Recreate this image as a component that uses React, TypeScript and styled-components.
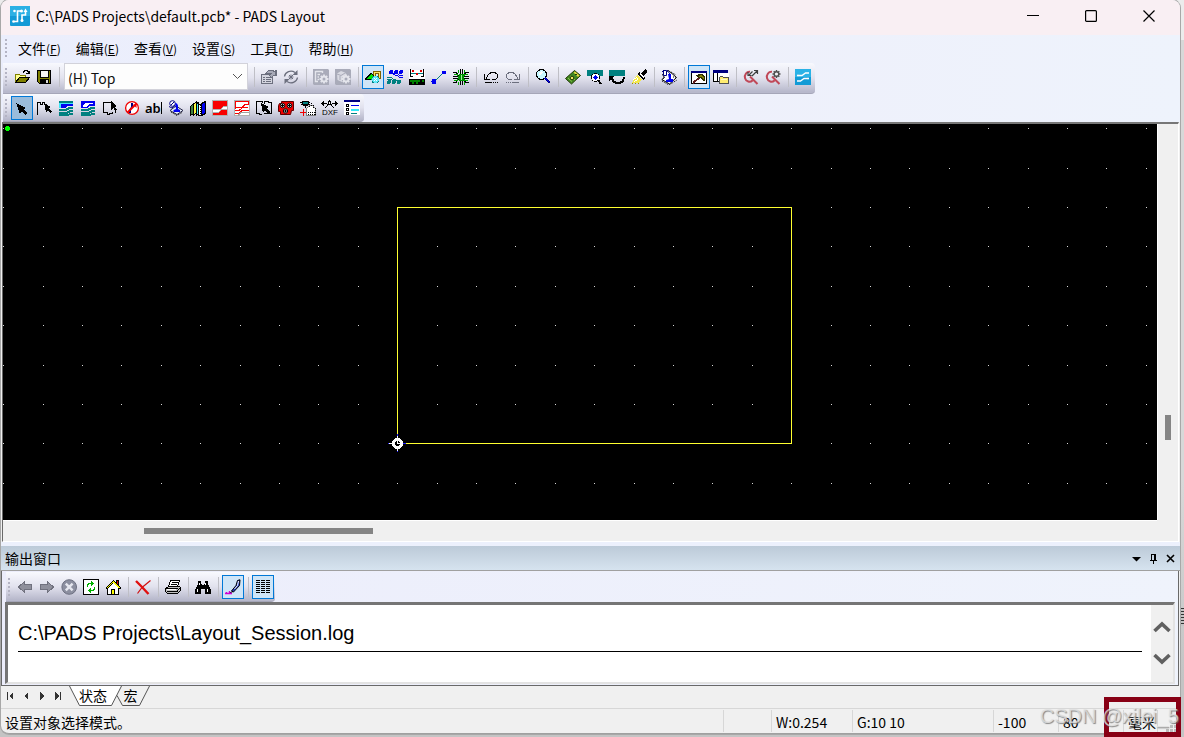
import React from "react";
import styled, { createGlobalStyle, css } from "styled-components";

const ui = `"Noto Sans CJK SC", "Noto Sans", sans-serif`;

const Global = createGlobalStyle`
  *, *::before, *::after { box-sizing: border-box; }
  html, body { margin: 0; padding: 0; }
  body { background: #c8c8c8; font-family: ${ui}; font-size: 14px; color: #000; overflow: hidden; }
  button { font: inherit; color: inherit; background: none; border: 0; padding: 0; margin: 0; }
  svg { display: block; flex: none; }
`;

/* ---------- icon drawing helpers ---------- */

const Glyph = ({ children, smooth, size = 16 }: { children: React.ReactNode; smooth?: boolean; size?: number }) => (
  <svg width={size} height={size} viewBox="0 0 16 16" shapeRendering={smooth ? "auto" : "crispEdges"} aria-hidden="true">
    {children}
  </svg>
);
const F = ({ c = "#000", d, o }: { c?: string; d: string; o?: string }) => <path d={d} fill={c} stroke={o} />;
const L = ({ c = "#000", d, w = 1, dash }: { c?: string; d: string; w?: number; dash?: string }) => (
  <path d={d} fill="none" stroke={c} strokeWidth={w} strokeDasharray={dash} />
);

const NAVY = "#000080";
const TEAL = "#008080";
const BLUE = "#0000f0";
const OLIVE = "#808000";
const GREY = "#6c6f7e";

const Open = () => (
  <Glyph>
    <F c="#ffff90" o="#808000" d="M1.5 13.5V5.5H5.5L6.5 6.5H11.5V8.5H5.5Z" />
    <F c={OLIVE} o="#000" d="M1.5 13.5L5.5 8.5H15.5L11.5 13.5Z" />
    <L d="M9.5 3.5V2.5H10.5V1.5H13.5V2.5H14.5V4M12 4.5H15.5V2" />
  </Glyph>
);
const Save = () => (
  <Glyph>
    <F c={OLIVE} o="#000" d="M1.5 1.5H14.5V14.5H3.5L1.5 12.5Z" />
    <F c="#f4f4f4" o="#000" d="M4.5 1.5H12.5V8.5H4.5Z" />
    <F d="M4 10H13V15H4Z" />
    <F c="#d8d8d8" d="M10 11H12V14H10Z" />
  </Glyph>
);
const Props = () => (
  <Glyph>
    <F c="#d4d5df" o={GREY} d="M.5 5.5H11.5V14.5H.5Z" />
    <L c={GREY} d="M2 8.5H4M5 8.5H10M2 10.5H4M5 10.5H10M2 12.5H4M5 12.5H10" />
    <F c="#a8aab8" o={GREY} d="M4.5 4.5L7.5 1.5H12.5V2.5H15.5V6.5H12.5L10.5 8.5L8.5 6.5L10 4.5Z" />
    <F c={GREY} d="M14 1H16V7H14Z" />
  </Glyph>
);
const Cycle = () => (
  <Glyph smooth>
    <L c={GREY} w={1.3} d="M1.5 7.5A6.5 6 0 0 1 12 3.5M14.5 8.5A6.5 6 0 0 1 4 12.5" />
    <F c={GREY} d="M14.5 1V6H9.5ZM1.5 15V10H6.5Z" />
    <L c={GREY} d="M8 5.5V10.5M5.5 8H10.5M6 6L10 10M10 6L6 10" />
  </Glyph>
);
const gear = "M11 5.5V14.5M6.5 10H15.5M7.8 6.8L14.2 13.2M14.2 6.8L7.8 13.2";
const DocGear = () => (
  <Glyph smooth>
    <F c="#a9abb9" d="M0 0H15L16 1V16H1L0 15Z" />
    <L c="#e4e5ec" w={1.4} d="M2.5 2.5H9.5V4M2.5 2V12.5H5M4.5 5.5H7M4.5 8H6M4.5 10.5H6" />
    <L c="#e4e5ec" w={1.8} d={gear} />
    <circle cx="11" cy="10" r="3.4" fill="#e4e5ec" />
    <circle cx="11" cy="10" r="1.5" fill="#a9abb9" />
  </Glyph>
);
const BoxGear = () => (
  <Glyph smooth>
    <F c="#a9abb9" d="M0 0H15L16 1V16H1L0 15Z" />
    <F c="#d9dae3" d="M2 4.5L6 2L10 3.5L11.5 6L7 9V13L2.5 11Z" />
    <L c="#a9abb9" d="M2 5L6 6.5L10 4M5 7V11" />
    <L c="#e4e5ec" w={1.8} d={gear} />
    <circle cx="11" cy="10" r="3.4" fill="#e4e5ec" />
    <circle cx="11" cy="10" r="1.5" fill="#a9abb9" />
  </Glyph>
);
const Shapes = () => (
  <Glyph>
    <F c="#806000" d="M8 2H16V10H8Z" />
    <F c="#ffe060" d="M9 3H15V9H9Z" />
    <F c="#806000" d="M10 4H14V8H10Z" />
    <F c="#cfe5f7" d="M11 5H13V7H11Z" />
    <F d="M0 11V9L6 3L10 8V11Z" />
    <F c="#00e000" d="M1 10L6 5L9 8V10Z" />
    <circle cx="10.5" cy="10.5" r="4" fill={TEAL} />
    <circle cx="10.5" cy="10.5" r="3.2" fill="#60e8f8" />
    <L c="#fff" d="M9 9L12 12M12 9L9 12" />
  </Glyph>
);
const Ratsnest = () => (
  <Glyph>
    <L c={BLUE} d="M4 3L8 6H10L12 8H16M9 3L12 6H16M14 3L16 4" />
    <L c={TEAL} d="M12 13L8 10H6L4 8H0M7 13L4 10H0M2 13L0 12" />
    {[4, 9, 14].map((x) => <circle key={x} cx={x} cy="3" r="2" fill={BLUE} />)}
    {[2, 7, 12].map((x) => <circle key={x} cx={x} cy="13" r="2" fill={TEAL} />)}
  </Glyph>
);
const Strip = () => (
  <Glyph>
    <F c="#fff" d="M0 1H16V10H0Z" />
    <F d="M0 10H16V16H0Z" />
    <F c="#008000" d="M1 11H11V13H13V11H15V13H9V15H7V13H5V15H3V13H1Z" />
    <L d="M1.5 0V8M14.5 0V8M1 7.5H4M12 7.5H15" />
    <L c={TEAL} d="M2 4.5H14" />
    <F c="#e00000" d="M3 1H5V3H3ZM11 1H13V3H11ZM7 4H9V6H7Z" />
  </Glyph>
);
const Connect = () => (
  <Glyph>
    <L c={TEAL} d="M3 13L13 3" />
    <circle cx="3" cy="12.5" r="2.5" fill={BLUE} />
    <circle cx="13" cy="3.5" r="2" fill={BLUE} />
  </Glyph>
);
const Burst = () => (
  <Glyph>
    <L c="#000" d="M0 3.5H3L6 7M0 7.5H5M0 9.5H5M0 13.5H3L6 10M16 3.5H13L10 7M16 7.5H11M16 9.5H11M16 13.5H13L10 10M7.5 0V5M9.5 0V5M7.5 16V11M9.5 16V11" />
    <L c="#00a000" d="M1 5.5H4L6 8.5L4 11.5H1M15 5.5H12L10 8.5L12 11.5H15M5.5 1V4M11.5 1V4M5.5 13V16M11.5 13V16" />
    <F c="#009000" d="M6 5H11V12H6Z" />
    <F c="#a0f0a0" d="M8 6H9V11H8Z" />
  </Glyph>
);
const undoArc = "M3 10L5.5 5.5L8 3.5H12L14.5 5.5V8.5L12.5 10.5H9";
const undoHead = "M1.5 5V10.5H7";
const Undo = () => (
  <Glyph>
    <L d={undoArc} />
    <L d={undoHead} />
    <L d="M2 13.5H9" />
    <L d="M10 13.5H16" dash="1 1" />
  </Glyph>
);
const Redo = () => (
  <Glyph>
    <g transform="matrix(-1 0 0 1 16 0)">
      <L c={GREY} d={undoArc} />
      <L c={GREY} d={undoHead} />
      <L c={GREY} d="M2 13.5H9" />
      <L c={GREY} d="M10 13.5H16" dash="1 1" />
    </g>
  </Glyph>
);
const Zoom = () => (
  <Glyph>
    <circle cx="6.5" cy="5.5" r="5" fill="#c8f8ff" stroke="#000" />
    <L c="#fff" w={2} d="M4 6L7 3" />
    <L c={NAVY} w={2} d="M10 9L15 14" />
    <L c={BLUE} d="M10.5 9.5L14.5 13.5" />
  </Glyph>
);
const Board = () => (
  <Glyph smooth>
    <F c="#408820" o="#203800" d="M.5 9.5L9.5 1.5L15.5 6.5L6.5 15Z" />
    <F c="#e8d840" d="M8.5 3.5L10 2.5L14.5 6.5L13 8Z" />
    <L c="#90c850" d="M3 9L7 12.5M5 7L10 11" />
    <circle cx="7" cy="9" r="1.8" fill="#f0e860" stroke="#203800" />
    <F c="#203800" d="M10 5H12V6H10Z" />
  </Glyph>
);
const ViewBoard = () => (
  <Glyph>
    <F c={TEAL} d="M0 1H16V7H0Z" />
    <circle cx="8.5" cy="8.5" r="4.5" fill="#000" />
    <circle cx="8.5" cy="8.5" r="3.6" fill="#fff" />
    <circle cx="8.5" cy="8.5" r="2.2" fill={BLUE} />
    <L w={2} d="M11 11L14 15" />
  </Glyph>
);
const FlipBoard = () => (
  <Glyph>
    <F c={TEAL} d="M0 1H16V7H0Z" />
    <L w={2} d="M3 9L4 12L7 14H11L14 12L15 8" />
    <F d="M0 12V7H5Z" />
  </Glyph>
);
const Brush = () => (
  <Glyph>
    <F d="M16 1L14 0L10 4L8 3L6 5L12 11L14 9L12 7L16 3Z" />
    <F c="#fff" d="M8 5L9 4L13 8L12 9Z" />
    <F c="#f4e848" d="M6 6L11 11L7 14H1L4 8Z" />
    <L c="#fff" dash="1 1" d="M3 13L9 8M2 11L7 7" />
    <L c="#a09000" dash="1 2" d="M1 14.5H8" />
  </Glyph>
);
const Pour = () => (
  <Glyph smooth>
    <F c="#e8f0ff" o="#202040" d="M2 10.5L8 6L15 10.5L9 14.5Z" />
    <L c="#000" dash="1 1" d="M3 12L9 15.5L14 12.5" />
    <circle cx="4.5" cy="3.5" r="2.8" fill="#fff" stroke={NAVY} />
    <L c={NAVY} d="M3 5L6 2M1 6.5L4 8L7 5.5" />
    <F c={BLUE} d="M7 3L9 3.5L10 5.5V9L12 10V12H5.5V10L8 9Z" />
  </Glyph>
);
const Tiles = () => (
  <Glyph smooth>
    <F c="#fff" o="#000" d="M7.5 1.5L15.5 8.5L8.5 15L.8 10.5L3.5 8.5L1.5 5.5Z" />
    <L dash="1 1" d="M1 12L8 16L16 11M10 3L15 6M2 9H4M12 8H15" />
    <F c="#fff" o={NAVY} d="M2.5 1.5H5.5V6.5H2.5Z" />
    <L c={NAVY} d="M6 1L9 5M1 3L3 1" />
    <F c={BLUE} d="M7 5H10V10H12V13H5V11L8 10Z" />
  </Glyph>
);
const Hammer = () => (
  <Glyph>
    <F c="#fff" o="#000" d="M.5 2.5H15.5V14.5H.5Z" />
    <F c={NAVY} d="M0 2H16V4H0Z" />
    <L c="#602020" w={2} d="M2 14L9 8" />
    <F c="#303000" d="M5 7V6L9 5H11L14 8V12H12L9 9H7Z" />
    <F c={OLIVE} d="M7 7L10 6L13 9V10H12L10 8H8Z" />
  </Glyph>
);
const Explorer = () => (
  <Glyph>
    <F c="#fff" o="#000" d="M.5 2.5H14.5V12.5H.5Z" />
    <F c={NAVY} d="M0 1H15V4H0Z" />
    <L d="M4.5 4V13" />
    <F c="#fff" d="M5 4H16V15H6Z" />
    <F c="#ffec70" o="#505050" d="M6.5 14.5V8.5L7.5 7.5H9.5L10.5 8.5H15.5V14.5Z" />
    <L c="#fff8c0" d="M8 10.5H14" />
  </Glyph>
);
const QArrow = () => (
  <Glyph smooth>
    <L c="#c04858" w={2} d="M7 2.8A4.6 5 0 1 0 9.5 11.5M7 7.5L14.5 15" />
    <L c="#404040" w={1.2} d="M6 6L9.5 2.5M9 7L14 2M11 1.5H14.5V5M5 3V6.5H8.5" />
  </Glyph>
);
const QGear = () => (
  <Glyph smooth>
    <L c="#c04858" w={2} d="M7 2.8A4.6 5 0 1 0 9.5 11.5M7 7.5L14.5 15" />
    <L c="#505050" w={1.4} d="M11.5 1V9M7.5 5H15.5M8.7 2.2L14.3 7.8M14.3 2.2L8.7 7.8" />
    <circle cx="11.5" cy="5" r="2.3" fill="#f0f0f4" stroke="#505050" strokeWidth="1.4" />
  </Glyph>
);
const Router = () => (
  <Glyph smooth>
    <F c="#129bd6" d="M0 0H16V16H0Z" />
    <F c="#2bb2e6" d="M0 0H16V8H0Z" />
    <L c="#fff" w={1.3} d="M4 6.5H7L10.5 4H14M2 12H5.5L9 9.5H12" />
    <circle cx="3" cy="6.5" r="1.1" fill="#fff" />
    <circle cx="13" cy="9.5" r="1.1" fill="#fff" />
  </Glyph>
);

const arrow = "M0 0L8 4L5 5L9 9L7 11L4 7L2 10Z";
const Select = () => <Glyph><g transform="translate(2 3)"><F d="M0 0L10 5L7 6L11 10L9 12L6 8L4 11Z" /></g></Glyph>;
const BoardOutline = () => (
  <Glyph>
    <L d="M1.5 15V2.5H4.5V4.5H6.5V2.5H8.5" />
    <g transform="translate(8 3)"><F d="M0 0L7 4L5 5L8 9L6 10L4 7L2 9Z" /></g>
  </Glyph>
);
const Copper = () => (
  <Glyph>
    <F c={TEAL} d="M1 1H15V3H1Z" />
    <F c="#40e8f8" d="M1 3H3V8H1ZM3 3H15V4H3Z" />
    <F c={BLUE} d="M3 4H15V6H9L7 8H3Z" />
    <L c={TEAL} w={2} d="M15 8H11L8 10H1M15 11H12L9 13H1M15 14H12L10 15H1" />
  </Glyph>
);
const CopperCut = () => (
  <Glyph>
    <F c={BLUE} d="M1 1H15V6H10L7 8H1Z" />
    <F c="#fff" d="M5 3H13V4H9L6 7H3V6Z" />
    <L c={TEAL} w={2} d="M15 8H11L8 10H1M15 11H12L9 13H1M15 14H12L10 15H1" />
  </Glyph>
);
const Keepout = () => (
  <Glyph>
    <L d="M10 12V13.5H7.5V14.5H5.5V12.5H1.5V2.5H9M13.5 10V13" />
    <g transform="translate(9 1)"><F d="M0 0L6 5L4 6L6 9L4 10L3 7L0 9Z" /></g>
  </Glyph>
);
const NoEntry = () => (
  <Glyph smooth>
    <circle cx="8" cy="8" r="6.4" fill="#fff" stroke="#f00000" strokeWidth="1.3" />
    <F c={NAVY} d="M7 3H9V7L7 9V13H5V10L7 7Z" />
    <L c="#f00000" w={2} d="M3.5 12.5L12.5 3.5" />
    <F c="#f00000" d="M9 4.5H12.5V8Z" />
  </Glyph>
);
const TextTool = () => (
  <svg width="18" height="16" viewBox="0 0 18 16" aria-hidden="true">
    <text x="0" y="13" fontFamily="Noto Sans, sans-serif" fontWeight="600" fontSize="13">ab</text>
    <path d="M16.5 2V14" stroke="#000" shapeRendering="crispEdges" />
  </svg>
);
const Library = () => (
  <Glyph>
    <F c="#408040" o="#000" d="M.5 6.5L3.5 3.5V13.5L.5 15.5Z" />
    <F c="#f8f840" o="#000" d="M3.5 4.5L6.5 1.5V12.5L3.5 15.5Z" />
    <F c="#40e8f8" o="#000" d="M6.5 3.5L8.5 2.5V13.5L6.5 15.5Z" />
    <F c="#fff" o="#000" d="M8.5 4.5H11.5V15.5H8.5Z" />
    <F c={BLUE} o="#000" d="M11.5 3.5L15.5 1.5V13.5L11.5 15.5Z" />
    <L dash="1 1" d="M10.5 5V15" />
  </Glyph>
);
const Plane = () => (
  <Glyph>
    <F c="#b0b0b0" d="M0 0H16V16H0Z" />
    <F c="#f80000" d="M1 1H15V6H11L8 9H1ZM1 13H6L9 10H15V15H1Z" />
    <F c="#fff" d="M1 10H8L11 7H15V9H10L6 12H1Z" />
  </Glyph>
);
const PlaneCut = () => (
  <Glyph>
    <F c="#b0b0b0" d="M0 0H16V16H0Z" />
    <F c="#fff" d="M1 1H15V15H1Z" />
    <L c="#f80000" d="M1.5 8.5V1.5H14.5V4.5H11L8 7.5H1.5M1 13.5H5L8 10.5H14.5M1 10.5H5L9 7.5H14" />
    <L c="#a0a0a0" d="M4 15.5L7 12.5H15" />
  </Glyph>
);
const CopyShape = () => (
  <Glyph>
    <L d="M6 14.5H3.5V13.5H.5V1.5H6.5V3M8 13.5H15.5V2.5H12.5V1.5H8.5V4" />
    <g transform="translate(5 3)"><F d={arrow} /></g>
  </Glyph>
);
const Autoplace = () => (
  <Glyph smooth>
    <F c="#f00000" o="#600000" d="M1.5 3.5H3.5V1.5H15.5V10.5H13.5L12.5 14.5H2.5V11.5H.5V5.5Z" />
    {[[4.5, 5.5], [11.5, 5.5], [7.5, 11]].map(([x, y]) => (
      <g key={x}>
        <circle cx={x} cy={y} r="2.2" fill="#fff" stroke="#000" />
        <path d={`M${x - 1.5} ${y}h3M${x} ${y - 1.5}v3`} stroke="#000" />
      </g>
    ))}
  </Glyph>
);
const AddPart = () => (
  <Glyph>
    <F c={TEAL} o="#000" d="M2.5 1.5H8.5V4.5H2.5Z" />
    <L d="M0 2.5H2M1 4.5H2M5.5 5V8M8 5.5H3" />
    <L c="#f00000" d="M0 12.5H6M3.5 9V16" />
    <F c="#fff" o="#808080" d="M6.5 8.5L9.5 5.5H12.5L15.5 8.5V15.5H6.5Z" />
    <L dash="1 1" d="M9.5 2V8M11.5 3V6M13.5 5V8M15.5 8V16M8 12.5H15M8 14.5H15" />
  </Glyph>
);
const Dxf = () => (
  <svg width="18" height="16" viewBox="0 0 18 16" shapeRendering="crispEdges" aria-hidden="true">
    <L d="M1 3.5H6M11 3.5H16M8.5 0V2M4 8L8.5 3L13 8M3 1.5L1 3.5L3 5.5M14 1.5L16 3.5L14 5.5" />
    <F c="#fff" o="#000" d="M7.5 1.5H9.5V4.5H7.5Z" />
    <text x="1" y="15" fontFamily="Liberation Sans, sans-serif" fontSize="8">DXF</text>
  </svg>
);
const Options = () => (
  <Glyph>
    <F c="#fff" d="M0 0H16V15H0Z" />
    <F c={NAVY} d="M0 0H16V2H0Z" />
    <L d="M2.5 4.5H4.5V6.5H2.5ZM2.5 8.5H4.5V10.5H2.5ZM2.5 12.5H4.5V14.5H2.5Z" />
    <L c={BLUE} d="M7 5.5H15" />
    <L c="#30e8f8" d="M7 9.5H15" w={2} />
    <L c={TEAL} d="M7 13.5H13" />
  </Glyph>
);

const Back = () => <Glyph><F c="#8f909c" o="#70717e" d="M1.5 8L7.5 2.5V5.5H14.5V10.5H7.5V13.5Z" /></Glyph>;
const Forward = () => <Glyph><F c="#8f909c" o="#70717e" d="M14.5 8L8.5 2.5V5.5H1.5V10.5H8.5V13.5Z" /></Glyph>;
const Stop = () => (
  <Glyph smooth>
    <circle cx="8.2" cy="8" r="7.3" fill="#8c8fa0" stroke="#6d7080" />
    <L c="#e6e7ef" w={2.4} d="M4.8 4.6L11.6 11.4M11.6 4.6L4.8 11.4" />
  </Glyph>
);
const Reload = () => (
  <Glyph>
    <F c="#fff" o="#000" d="M.5 .5H15.5V15.5H.5Z" />
    <L c="#00b000" d="M4.5 8V6L6 4.5H9M11.5 8V10L10 11.5H7" />
    <F c="#00b000" d="M8 2V7L11 4.5ZM8 9V14L5 11.5Z" />
  </Glyph>
);
const Home = () => (
  <Glyph>
    <F c="#000" d="M11 1H14V8H11Z" />
    <F c="#e00000" d="M12 2H13V6H12Z" />
    <F c="#000" d="M2 8L8 2L14 8V16H2Z" />
    <F c="#fff" d="M3 9L8 4L13 9V15H3Z" />
    <F c="#000" d="M0 9L8 1L16 9L15 10L8 4L1 10Z" />
    <F c="#f8f800" d="M1 9L8 2L15 9H14L8 4L2 9Z" />
    <F c="#000" d="M6 10H10V16H6Z" />
    <F c="#f8f800" d="M7 11H9V15H7Z" />
  </Glyph>
);
const Delete = () => (
  <Glyph smooth>
    <L c="#d01010" w={1.2} d="M15.5 1.5L7 8.5L2.5 14.5" />
    <L c="#e01010" w={2.4} d="M1 2L6 7L13.5 15" />
  </Glyph>
);
const Print = () => (
  <Glyph>
    <F c="#fff" o="#000" d="M5.5 1.5H14.5L12.5 7.5H3.5Z" />
    <L d="M7 3.5H13M6 5.5H12" />
    <F c="#c0c0c0" o="#000" d="M3.5 7.5H14.5L15.5 8.5V11.5L12.5 14.5H2.5L.5 12.5V9.5Z" />
    <L d="M1 9.5H13M2 12.5H12L15 9" />
    <L c="#fff" d="M2 10.5H11" />
  </Glyph>
);
const Find = () => (
  <Glyph>
    <F d="M3 2H6V4L7 6H9L10 4V2H13V5L16 11V15H10V10H6V15H0V11L3 5Z" />
    <L c="#fff" d="M4.5 4V6M2.5 10V13M10.5 4V6M12.5 10V13" />
  </Glyph>
);
const Pen = () => (
  <Glyph smooth>
    <F c="#2040c0" o="#000" d="M6.5 12L11 6.5L12.5 1.5L15 .8L14.5 6.5L8.5 13Z" />
    <L c="#fff" d="M9.5 10L12.5 6.5L13.5 2" />
    <L c="#000" d="M4.5 14L8 12.5" />
    <L c="#d000d0" w={1.4} d="M0 14.5H7M1.5 13V15M4.5 12V15" />
  </Glyph>
);
const List = () => (
  <Glyph>
    {[1, 3, 5, 7, 9, 11, 13].map((y) => <L key={y} d={`M1 ${y + 0.5}H5M6 ${y + 0.5}H10M11 ${y + 0.5}H15`} />)}
  </Glyph>
);

/* ---------- layout ---------- */

const Desktop = styled.div`
  position: relative;
  height: 100vh;
  min-height: 480px;
  padding: 0 4px 3px 1px;
  background:
    repeating-linear-gradient(#333 0 1px, #c4c4c4 1px 3px) right 0 top 608px / 4px 18px no-repeat,
    linear-gradient(#ececec 0 40px, #d8d8d8 40px 480px, #c4c4c4 680px);
`;
const Window = styled.main`
  display: flex;
  flex-direction: column;
  height: 100%;
  overflow: hidden;
  background: #f0f0f0;
  border-bottom: 1px solid #a0a0a0;
  border-radius: 8px;
  box-shadow: 0 0 0 1px #a8a8a8;
`;
const TitleBar = styled.header`
  display: flex;
  align-items: center;
  flex: none;
  height: 35px;
  padding: 0 25px 3px 9px;
  background: #f9eff3;
`;
const Title = styled.h1`
  flex: 1;
  margin: 0 0 0 6px;
  font: 400 14px/20px ${ui};
`;
const Captions = styled.div`
  display: flex;
  gap: 46px;
`;
const CaptionButton = styled.button`
  width: 12px;
  height: 12px;
`;
const Docks = styled.div`
  flex: none;
  background: linear-gradient(90deg, #ebeefc, #eef0fb 60%, #eef3fc);
`;
const MenuBar = styled.nav`
  display: flex;
  align-items: center;
  height: 28px;
  padding: 0 0 2px 4px;
  gap: 15px;
`;
const MenuItem = styled.button`
  line-height: 20px;
  white-space: nowrap;
`;
const Accel = styled.span`
  font-size: 12px;
`;
const Grip = styled.span<{ $space?: number }>`
  flex: none;
  width: 2px;
  height: 18px;
  margin-right: ${(p) => p.$space ?? 4}px;
  background: repeating-linear-gradient(#b4b4c4 0 2px, transparent 2px 4px);
`;
const Toolbar = styled.div<{ $height: number; $under?: number; $inset?: number }>`
  display: flex;
  align-items: center;
  width: max-content;
  height: ${(p) => p.$height}px;
  margin-left: ${(p) => p.$inset ?? 2}px;
  padding: 0 1px ${(p) => p.$under ?? 0}px 2px;
  background: linear-gradient(#f8f9fe, #e2e2ee 50%, #b8b9cc 95%);
  border-bottom: 1px solid #a5a6b8;
  border-radius: 0 4px 4px 0;
`;
const ToolButton = styled.button<{ $state?: "on" | "pressed" }>`
  display: flex;
  align-items: center;
  justify-content: center;
  flex: none;
  width: 22px;
  height: 24px;
  ${(p) => p.$state && css`
    border: 1px solid #0078d7;
    background: ${p.$state === "on" ? "#cfe5f7" : "#9abcdb"};
  `}
`;
const Separator = styled.span`
  flex: none;
  width: 1px;
  height: 20px;
  margin: 0 3px 0 4px;
  background: #bfbfc6;
`;
const LayerBox = styled.span`
  position: relative;
  display: block;
  margin: 0 2px 0 1px;
  svg { position: absolute; right: 5px; top: 10px; pointer-events: none; }
`;
const LayerSelect = styled.select`
  display: block;
  appearance: none;
  width: 184px;
  height: 27px;
  padding: 2px 20px 0 3px;
  border: 1px solid #d2d2da;
  border-radius: 0;
  background: #fdfdfd;
  color: #111;
  font: 400 14px/24px ${ui};
`;
const View = styled.section`
  flex: 1 1 0;
  min-height: 0;
  display: grid;
  grid-template-columns: 1fr 21px;
  grid-template-rows: 1fr 21px;
  margin: 0 1px;
  border: solid;
  border-width: 2px 1px 1px 1px;
  border-color: #777 #fff #fff #696969;
`;
const Sheet = styled.svg`
  width: 100%;
  height: 100%;
  min-height: 0;
  background: #000;
`;
const ScrollV = styled.div`
  display: flex;
  flex-direction: column;
  align-items: center;
  justify-content: flex-end;
  padding-bottom: 80px;
  border-left: 1px solid #fff;
`;
const ScrollH = styled.div`
  padding: 7px 0 0 141px;
  border-top: 1px solid #fff;
`;
const Thumb = styled.div<{ $w: number; $h: number }>`
  width: ${(p) => p.$w}px;
  height: ${(p) => p.$h}px;
  background: #858585;
`;
const PanelTitle = styled.div`
  display: flex;
  align-items: center;
  flex: none;
  height: 29px;
  padding: 0 4px;
  border-top: 4px solid #ecf0fc;
  border-bottom: 1px solid #a0a0a0;
  background: linear-gradient(#bccad8, #d6e3ef);
  h2 { flex: 1; margin: 0; font: 400 14px/20px ${ui}; }
`;
const PanelButton = styled.button`
  width: 11px;
  height: 11px;
  margin-left: 6px;
`;
const Panel = styled.section`
  flex: none;
  margin-right: 1px;
  padding: 1px 3px 0 3px;
  border: 1px solid #696969;
  border-top: 0;
  background: linear-gradient(90deg, #ecedfb, #eff3fc);
`;
const LogFrame = styled.div`
  display: flex;
  height: 82px;
  margin-bottom: 1px;
  border: solid;
  border-width: 3px 2px 2px 3px;
  border-color: #757575 #e3e3e3 #e3e3e3 #757575;
  background: #fff;
`;
const Log = styled.div`
  flex: 1;
  padding: 13px 9px 0 10px;
`;
const LogPath = styled.p`
  margin: 0;
  padding-bottom: 3px;
  border-bottom: 1px solid #000;
  font: 400 20px/30px "Liberation Sans", sans-serif;
`;
const LogScroll = styled.div`
  display: flex;
  flex-direction: column;
  align-items: center;
  gap: 20px;
  width: 22px;
  padding-top: 16px;
  background: #f0f0f0;
`;
const TabStrip = styled.div`
  display: flex;
  flex: none;
  height: 23px;
  border-bottom: 1px solid #d7d7d7;
`;
const TabNav = styled.div`
  display: flex;
  gap: 6px;
  padding: 5px 6px 0 4px;
`;
const NavButton = styled.button`
  width: 10px;
  height: 10px;
`;
const Tab = styled.button<{ $w: number }>`
  position: relative;
  width: ${(p) => p.$w}px;
  height: 20px;
  margin-right: -6px;
  padding: 0 5px 2px 0;
  line-height: 18px;
  svg { position: absolute; left: 0; top: 0; }
  span { position: relative; }
`;
const StatusBar = styled.footer`
  display: flex;
  flex: none;
  height: 24px;
  padding: 1px 0;
  line-height: 24px;
  white-space: nowrap;
`;
const Message = styled.span`
  flex: 1;
  padding-left: 4px;
`;
const Cell = styled.span<{ $w: number }>`
  flex: none;
  width: ${(p) => p.$w}px;
  padding-left: 4px;
  border-left: 1px solid #d7d7d7;
`;
const Highlight = styled.div`
  position: absolute;
  right: 3px;
  bottom: 0;
  width: 77px;
  height: 40px;
  border: 5px solid #880015;
`;
const Watermark = styled.div`
  position: absolute;
  right: 5px;
  bottom: 9px;
  font: 400 20px/24px "Liberation Sans", sans-serif;
  color: rgba(225, 225, 225, 0.8);
  text-shadow: 1px 1px 1px rgba(110, 110, 110, 0.8);
`;

/* ---------- parts ---------- */

type Item = [string, React.ComponentType, ("on" | "pressed")?] | "|";

const Tools = ({ items }: { items: Item[] }) => (
  <>
    {items.map((it, i) => {
      if (it === "|") return <Separator key={i} />;
      const [label, Icon, state] = it;
      return (
        <ToolButton key={i} aria-label={label} $state={state}><Icon /></ToolButton>
      );
    })}
  </>
);

const fileTools: Item[] = [["打开", Open], ["保存", Save], "|"];
const mainTools: Item[] = [
  "|", ["特性", Props], ["循环", Cycle],
  "|", ["文档设置", DocGear], ["封装设置", BoxGear],
  "|", ["绘图", Shapes, "on"], ["设计", Ratsnest], ["标注", Strip], ["布线", Connect], ["BGA", Burst],
  "|", ["撤销", Undo], ["重做", Redo],
  "|", ["缩放", Zoom],
  "|", ["板", Board], ["查看板", ViewBoard], ["翻转", FlipBoard], ["重画", Brush],
  "|", ["灌注", Tiles],
  "|", ["输出窗口", Hammer, "on"], ["项目浏览器", Explorer],
  "|", ["查询", QArrow], ["查询设置", QGear],
  "|", ["Router", Router],
];
const drawTools: Item[] = [
  ["选择", Select, "pressed"], ["绘图线", BoardOutline], ["铜箔", Copper], ["铜挖空", CopperCut],
  ["覆铜", Keepout], ["禁止区", NoEntry], ["文本", TextTool], ["灌注管理", Pour], ["库", Library],
  ["平面", Plane], ["平面挖空", PlaneCut], ["复制", CopyShape], ["自动布局", Autoplace],
  ["添加标签", AddPart], ["导入 DXF", Dxf], ["选项", Options],
];
const outputTools: Item[] = [
  ["后退", Back], ["前进", Forward], ["停止", Stop], ["刷新", Reload], ["主页", Home],
  "|", ["删除", Delete], "|", ["打印", Print], "|", ["查找", Find],
  "|", ["记录", Pen, "on"], "|", ["列表", List, "on"],
];
const menus = [["文件", "F"], ["编辑", "E"], ["查看", "V"], ["设置", "S"], ["工具", "T"], ["帮助", "H"]];

const origin = { x: 394, y: 319 };
const pitch = 39.4;
const columns = Array.from({ length: 60 }, (_, i) => Math.round(origin.x + 0.1 + (i - 10) * pitch));
const rows = Array.from({ length: 40 }, (_, i) => Math.round(origin.y + 0.3 + (i - 8) * pitch));

const DesignSheet = () => (
  <Sheet shapeRendering="crispEdges" role="img" aria-label="PCB">
    {rows.map((y) => columns.map((x) => <rect key={`${x},${y}`} x={x} y={y} width="1" height="1" fill="#d8d8d8" />))}
    <rect x={origin.x + 0.5} y="83.5" width="394" height="236" fill="none" stroke="#ffff30" />
    <path d="M394.5 310V328M385 319.5H403" stroke="#2020ff" />
    <path d="M394.5 312V327M386 319.5H399" stroke="#fff" />
    <circle cx="394.5" cy="319.5" r="4" fill="#000" stroke="#fff" strokeWidth="3" />
    <path d="M394 317h1v2h2v1h-3z" fill="#fff" />
    <circle cx="4.5" cy="4.5" r="2.5" fill="#00ff00" />
  </Sheet>
);

const Chevron = ({ up }: { up?: boolean }) => (
  <svg width="18" height="12" viewBox="0 0 18 12" aria-hidden="true">
    <path d={up ? "M1.5 10L9 3L16.5 10" : "M1.5 2L9 9L16.5 2"} fill="none" stroke="#606060" strokeWidth="3.6" />
  </svg>
);

const navShapes = ["M2 1H3V9H2ZM8 1V9L4 5Z", "M7 1V9L3 5Z", "M3 1V9L7 5Z", "M2 1V9L6 5ZM7 1H8V9H7Z"];

export default function App() {
  return (
    <Desktop>
      <Global />
      <Window>
        <TitleBar>
          <svg width="20" height="20" viewBox="0 0 20 20" aria-hidden="true">
            <rect width="20" height="20" rx="1" fill="#139ad6" />
            <rect width="20" height="10" fill="#2cb0e4" />
            <path d="M4 15.5H7.5V5H11M12 14V9H15.5V5" fill="none" stroke="#fff" strokeWidth="1.6" />
            <circle cx="3.5" cy="15.5" r="1.3" fill="#fff" />
            <circle cx="11.5" cy="5" r="1.5" fill="#fff" />
            <circle cx="12" cy="14.5" r="1.5" fill="#fff" />
            <circle cx="4.5" cy="5" r="1.3" fill="#fff" />
            <path d="M13.5 6L15.5 2.5L17.5 6Z" fill="#fff" />
          </svg>
          <Title>C:\PADS Projects\default.pcb* - PADS Layout</Title>
          <Captions>
            <CaptionButton aria-label="最小化"><svg width="12" height="12"><path d="M0 5.5H12" stroke="#000" /></svg></CaptionButton>
            <CaptionButton aria-label="最大化"><svg width="12" height="12"><rect x=".6" y=".6" width="10.8" height="10.8" rx="1" fill="none" stroke="#000" strokeWidth="1.2" /></svg></CaptionButton>
            <CaptionButton aria-label="关闭"><svg width="12" height="12"><path d="M.5 .5L11.5 11.5M11.5 .5L.5 11.5" stroke="#000" strokeWidth="1.2" /></svg></CaptionButton>
          </Captions>
        </TitleBar>

        <Docks>
          <MenuBar>
            <Grip $space={-4} />
            {menus.map(([name, key]) => (
              <MenuItem key={key}>{name}<Accel>(<u>{key}</u>)</Accel></MenuItem>
            ))}
          </MenuBar>
          <Toolbar $height={31} $under={3}>
            <Grip />
            <Tools items={fileTools} />
            <LayerBox>
              <LayerSelect aria-label="层" defaultValue="top"><option value="top">(H) Top</option></LayerSelect>
              <svg width="11" height="7"><path d="M1 1L5.5 5.5L10 1" fill="none" stroke="#555" /></svg>
            </LayerBox>
            <Tools items={mainTools} />
          </Toolbar>
          <Toolbar $height={28}>
            <Grip />
            <Tools items={drawTools} />
          </Toolbar>
        </Docks>

        <View>
          <DesignSheet />
          <ScrollV><Thumb $w={6} $h={25} /></ScrollV>
          <ScrollH><Thumb $w={229} $h={6} /></ScrollH>
        </View>

        <PanelTitle>
          <h2>输出窗口</h2>
          <PanelButton aria-label="菜单"><svg width="11" height="11"><path d="M1 4H10L5.5 8.5Z" /></svg></PanelButton>
          <PanelButton aria-label="固定">
            <svg width="11" height="11" shapeRendering="crispEdges">
              <path d="M3.5 7V1.5H7.5V7M2 7.5H9M5.5 8V11M6.5 2V7" fill="none" stroke="#000" />
            </svg>
          </PanelButton>
          <PanelButton aria-label="关闭面板"><svg width="11" height="11"><path d="M2 2L9 9M9 2L2 9" stroke="#000" strokeWidth="1.6" /></svg></PanelButton>
        </PanelTitle>

        <Panel>
          <Toolbar $height={30} $inset={1}>
            <Grip />
            <Tools items={outputTools} />
          </Toolbar>
          <LogFrame>
            <Log><LogPath>C:\PADS Projects\Layout_Session.log</LogPath></Log>
            <LogScroll><Chevron up /><Chevron /></LogScroll>
          </LogFrame>
        </Panel>

        <TabStrip>
          <TabNav>
            {navShapes.map((d) => (
              <NavButton key={d} aria-label="切换标签">
                <svg width="10" height="10" shapeRendering="crispEdges"><path d={d} fill="#333" /></svg>
              </NavButton>
            ))}
          </TabNav>
          <Tab $w={53}>
            <svg width="53" height="20"><path d="M.5 0L10.5 19.5H42.5L52.5 0" fill="#fff" stroke="#555" /></svg>
            <span>状态</span>
          </Tab>
          <Tab $w={34}>
            <svg width="34" height="20"><path d="M1 9.5L6.5 19.5H23.5L33.5 0" fill="none" stroke="#555" /></svg>
            <span>宏</span>
          </Tab>
        </TabStrip>

        <StatusBar>
          <Message>设置对象选择模式。</Message>
          <Cell $w={48} />
          <Cell $w={81}>W:0.254</Cell>
          <Cell $w={141}>G:10 10</Cell>
          <Cell $w={65}>-100</Cell>
          <Cell $w={65}>80</Cell>
          <Cell $w={34}>毫米</Cell>
          <Cell $w={23}>
            <svg width="16" height="22" shapeRendering="crispEdges" aria-hidden="true">
              <path d="M12 11h3v3h-3zM8 15h3v3h-3zM12 15h3v3h-3zM4 19h3v3h-3zM8 19h3v3h-3zM12 19h3v3h-3z" fill="#bcbcbc" />
            </svg>
          </Cell>
        </StatusBar>
      </Window>
      <Highlight />
      <Watermark>CSDN @xilei_5</Watermark>
    </Desktop>
  );
}
